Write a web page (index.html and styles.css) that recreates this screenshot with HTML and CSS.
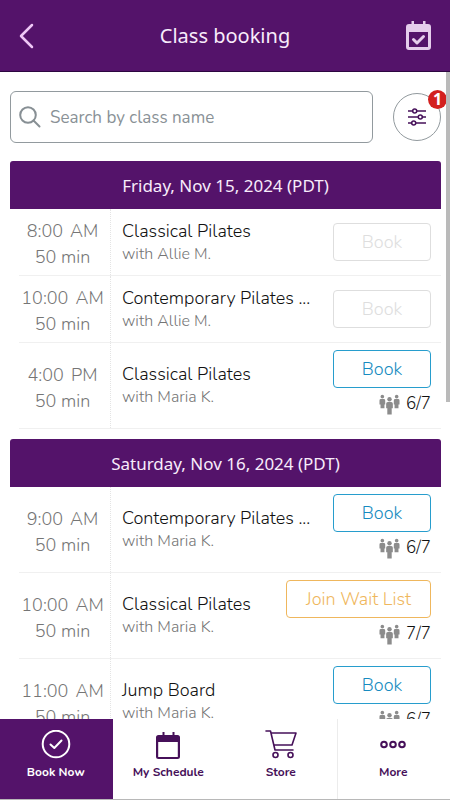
FILE: index.html
```html
<!DOCTYPE html>
<html lang="en">
<head>
<meta charset="utf-8">
<meta name="viewport" content="width=device-width, initial-scale=1">
<title>Class booking</title>
<link rel="stylesheet" href="styles.css">
</head>
<body>
<svg class="defs" aria-hidden="true">
  <symbol id="people" viewBox="0 0 22 22">
    <circle cx="3.500" cy="2.800" r="1.900"/>
    <path d="M2 5.300h3q1.500 0 1.500 1.500V11h-.8v4H1.600v-4H.5V6.800Q.5 5.300 2 5.300Z"/>
    <circle cx="18.500" cy="2.800" r="1.900"/>
    <path d="M17 5.300h3q1.500 0 1.500 1.500V11h-1.100v4h-4.100v-4h-.8V6.800q0-1.500 1.500-1.500Z"/>
    <circle cx="11" cy="5.500" r="2.300"/>
    <path d="M9.200 8.500h3.600q1.700 0 1.700 1.700V15h-1.200v6.500H8.700V15H7.500v-4.800q0-1.700 1.700-1.700Z"/>
  </symbol>
</svg>
<header class="topbar">
  <button class="icon-button" aria-label="Back">
    <svg width="16" height="26" viewBox="0 0 16 26"><path class="chevron" d="M14 2 3 13l11 11"/></svg>
  </button>
  <h1 class="title">Class booking</h1>
  <button class="icon-button" aria-label="My bookings">
    <svg width="26" height="30" viewBox="0 0 26 30"><path class="cal-fill" fill-rule="evenodd" d="M5.500 0H8v3h9V0h2.500v3h2.500Q25 3 25 6v20q0 3-3 3H3q-3 0-3-3V6q0-3 3-3h2.500ZM3 11v15h19V11Z"/><path class="cal-check" d="m7.500 18.500 3.500 3.500 6.500-6.500"/></svg>
  </button>
</header>
<main class="content">
  <form class="tools">
    <div class="search">
      <svg class="search-icon" width="22" height="22" viewBox="0 0 22 22"><circle cx="9" cy="9" r="7.800"/><path d="m14.500 14.500 6 6"/></svg>
      <input class="search-input" type="text" aria-label="Search by class name" placeholder="Search by class name">
    </div>
    <button class="filter" type="button" aria-label="Filters, 1 active">
      <svg width="18" height="18" viewBox="0 0 18 18"><path d="M0 3h4.500M9 3h9M0 9h10M14.500 9H18M0 15h3.500M8 15h10"/><circle cx="6.700" cy="3" r="2"/><circle cx="12.300" cy="9" r="2"/><circle cx="5.700" cy="15" r="2"/></svg>
      <span class="badge">1</span>
    </button>
  </form>
  <section class="day">
    <h2 class="date">Friday, Nov 15, 2024 (PDT)</h2>
    <ul class="classes">
      <li class="class-row">
        <div class="when"><span class="clock"><span>8:00</span><span>AM</span></span><span>50 min</span></div>
        <div class="info"><h3 class="name">Classical Pilates</h3><p class="teacher">with Allie M.</p></div>
        <div class="action"><button class="book" disabled>Book</button></div>
      </li>
      <li class="class-row">
        <div class="when"><span class="clock"><span>10:00</span><span>AM</span></span><span>50 min</span></div>
        <div class="info"><h3 class="name">Contemporary Pilates ...</h3><p class="teacher">with Allie M.</p></div>
        <div class="action"><button class="book" disabled>Book</button></div>
      </li>
      <li class="class-row">
        <div class="when"><span class="clock"><span>4:00</span><span>PM</span></span><span>50 min</span></div>
        <div class="info"><h3 class="name">Classical Pilates</h3><p class="teacher">with Maria K.</p></div>
        <div class="action"><button class="book">Book</button><span class="spots"><svg width="21" height="21"><use href="#people"/></svg>6/7</span></div>
      </li>
    </ul>
  </section>
  <section class="day">
    <h2 class="date">Saturday, Nov 16, 2024 (PDT)</h2>
    <ul class="classes">
      <li class="class-row">
        <div class="when"><span class="clock"><span>9:00</span><span>AM</span></span><span>50 min</span></div>
        <div class="info"><h3 class="name">Contemporary Pilates ...</h3><p class="teacher">with Maria K.</p></div>
        <div class="action"><button class="book">Book</button><span class="spots"><svg width="21" height="21"><use href="#people"/></svg>6/7</span></div>
      </li>
      <li class="class-row">
        <div class="when"><span class="clock"><span>10:00</span><span>AM</span></span><span>50 min</span></div>
        <div class="info"><h3 class="name">Classical Pilates</h3><p class="teacher">with Maria K.</p></div>
        <div class="action"><button class="book wait">Join Wait List</button><span class="spots"><svg width="21" height="21"><use href="#people"/></svg>7/7</span></div>
      </li>
      <li class="class-row">
        <div class="when"><span class="clock"><span>11:00</span><span>AM</span></span><span>50 min</span></div>
        <div class="info"><h3 class="name">Jump Board</h3><p class="teacher">with Maria K.</p></div>
        <div class="action"><button class="book">Book</button><span class="spots"><svg width="21" height="21"><use href="#people"/></svg>6/7</span></div>
      </li>
    </ul>
  </section>
  <div class="scroll-thumb"></div>
</main>
<nav class="tabs">
  <a class="tab active" href="#book" aria-current="page">
    <svg class="line-icon" width="30" height="30" viewBox="0 0 30 30"><circle cx="15" cy="14" r="13.300"/><path d="m9.500 14.500 3.800 3.500 7.200-7.500"/></svg>
    Book Now
  </a>
  <a class="tab" href="#schedule">
    <svg width="26" height="30" viewBox="0 0 26 30"><path fill="currentColor" fill-rule="evenodd" d="M7.500 2h2v3h8V2h2v3h3Q25 5 25 7.500v19q0 2.500-2.500 2.500h-19Q1 29 1 26.500v-19Q1 5 3.500 5h4ZM3.200 12v15h19.600V12Z"/></svg>
    My Schedule
  </a>
  <a class="tab" href="#store">
    <svg class="line-icon cart" width="32" height="30" viewBox="0 0 32 30"><path d="M1 1h4.500l4.500 19h18M6 3h25l-4 12H9"/><circle cx="10.500" cy="25" r="2.500"/><circle cx="25.500" cy="25" r="2.500"/></svg>
    Store
  </a>
  <a class="tab" href="#more">
    <svg class="line-icon" width="28" height="30" viewBox="0 0 28 30"><circle cx="5" cy="14.500" r="2.800"/><circle cx="14" cy="14.500" r="2.800"/><circle cx="23" cy="14.500" r="2.800"/></svg>
    More
  </a>
</nav>
</body>
</html>
```

FILE: styles.css
```css
* { box-sizing: border-box; }

body {
  margin: 0;
  height: 100vh;
  display: flex;
  flex-direction: column;
  background: #fff;
  color: #111;
  font-family: Nunito, "Open Sans", sans-serif;
}

h1, h2, h3, p, ul { margin: 0; padding: 0; font-weight: 400; }
ul { list-style: none; }
button, input { font: inherit; }
button { cursor: pointer; }
svg { display: block; flex: none; }
.defs { position: absolute; width: 0; height: 0; }

.topbar {
  flex: none;
  height: 72px;
  padding: 0 18px;
  display: grid;
  grid-template-columns: 26px 1fr 26px;
  align-items: center;
  background: #54136a;
  border-bottom: 1px solid #2c0640;
}
.title {
  text-align: center;
  color: #f8ecfb;
  font: 400 20px/30px "Noto Sans", sans-serif;
}
.icon-button { padding: 0; border: 0; background: none; color: #e5cdec; }
.chevron, .cal-check { fill: none; stroke: #efc8f6; stroke-width: 2.500; stroke-linecap: round; stroke-linejoin: round; }
.cal-check { stroke: #e5cdec; stroke-width: 3; }
.cal-fill { fill: #e5cdec; }

.content {
  position: relative;
  flex: 1;
  min-height: 0;
  overflow: hidden;
  padding: 19px 9px 0 10px;
}
.tools { display: flex; align-items: center; gap: 20px; margin-bottom: 18px; }
.search {
  flex: 1;
  min-width: 0;
  height: 52px;
  padding: 0 8px;
  display: flex;
  align-items: center;
  gap: 9px;
  border: 1px solid #929a9e;
  border-radius: 6px;
}
.search-icon { fill: none; stroke: #878f94; stroke-width: 2; stroke-linecap: round; }
.search-input {
  flex: 1;
  min-width: 0;
  padding: 0;
  border: 0;
  outline: 0;
  background: none;
  font-size: 17px;
}
.search-input::placeholder { color: #899196; opacity: 1; }
.filter {
  position: relative;
  width: 48px;
  height: 48px;
  padding: 0;
  display: grid;
  place-items: center;
  border: 1px solid #929a9e;
  border-radius: 50%;
  background: #fff;
}
.filter svg { fill: none; stroke: #461059; stroke-width: 1.500; stroke-linecap: round; }
.badge {
  position: absolute;
  top: -4px;
  right: -7px;
  width: 19px;
  height: 19px;
  border-radius: 50%;
  background: #d3201f;
  color: #fff;
  font: 700 16px/19px "Noto Sans", sans-serif;
  text-align: center;
}

.day { margin-bottom: 10px; }
.date {
  height: 48px;
  border-radius: 3px 3px 0 0;
  background: #54136a;
  color: #f8ecfb;
  font: 400 17px/49px "Noto Sans", sans-serif;
  text-align: center;
}
.classes { padding-left: 9px; }
.class-row {
  display: grid;
  grid-template-columns: 92px 1fr auto;
  border-bottom: 1px solid #f0f0f0;
}
.when {
  padding: 4px 4px 0 0;
  display: flex;
  flex-direction: column;
  align-items: center;
  justify-content: center;
  border-right: 1px dotted #e4e4e4;
  color: #757575;
  font-size: 18px;
  font-weight: 300;
  line-height: 26px;
}
.clock { display: flex; gap: 7px; }
.info { align-self: center; padding: 1px 0 0 11px; white-space: nowrap; min-width: 0; }
.name { font-size: 18px; font-weight: 350; line-height: 23px; }
.teacher { color: #757575; font-size: 16px; line-height: 23px; font-weight: 300; }
.action {
  padding: 7px 10px 13px 0;
  display: flex;
  flex-direction: column;
  align-items: flex-end;
  gap: 5px;
}
.book {
  min-width: 98px;
  height: 38px;
  padding: 0 19px;
  border: 1px solid #279dcd;
  border-radius: 4px;
  background: #fff;
  color: #168bc0;
  font-size: 18px;
  font-weight: 350;
  line-height: 24px;
}
.book:disabled { border-color: #dedede; color: #dedede; cursor: default; }
.action:has(.book:disabled) { padding-block: 14px; }
.wait { border-color: #efb75d; color: #efb75d; }
.spots { display: flex; align-items: center; gap: 6px; font-size: 17px; font-weight: 350; line-height: 22px; }
.spots svg { fill: #8c8c8c; }
.scroll-thumb { position: absolute; top: 0; right: 0; width: 4px; height: 51%; background: #bababa; }

.tabs {
  flex: none;
  height: 81px;
  display: grid;
  grid-template-columns: repeat(4, 1fr);
  border-bottom: 1px solid #b8b8b8;
  background: #fff;
}
.tab {
  padding-top: 11px;
  display: flex;
  flex-direction: column;
  align-items: center;
  gap: 2px;
  border-right: 1px solid #ececec;
  color: #461059;
  font-size: 12px;
  font-weight: 700;
  line-height: 20px;
  text-decoration: none;
}
.tab:nth-child(2), .tab:last-child { border-right-color: transparent; }
.active { background: #54136a; color: #fff; border-color: #54136a; }
.line-icon { fill: none; stroke: currentColor; stroke-width: 2; stroke-linecap: round; stroke-linejoin: round; }
.cart { stroke-width: 1.600; }
```
